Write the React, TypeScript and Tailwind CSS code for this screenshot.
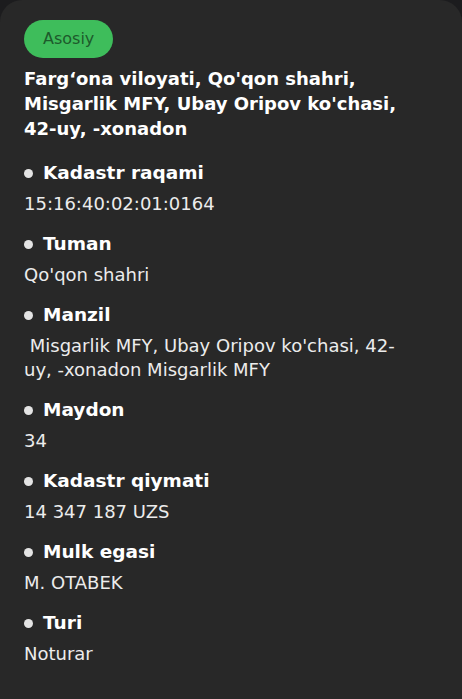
import React from "react";

const font = { fontFamily: '"DejaVu Sans", "Noto Sans", sans-serif' };

const rows: { label: string; value: string }[] = [
  { label: "Kadastr raqami", value: "15:16:40:02:01:0164" },
  { label: "Tuman", value: "Qo'qon shahri" },
  { label: "Manzil", value: "\u00a0Misgarlik MFY, Ubay Oripov ko'chasi, 42-uy, -xonadon Misgarlik MFY" },
  { label: "Maydon", value: "34" },
  { label: "Kadastr qiymati", value: "14 347 187 UZS" },
  { label: "Mulk egasi", value: "M. OTABEK" },
  { label: "Turi", value: "Noturar" },
];

export default function App() {
  return (
    <div className="min-h-screen bg-[#1c1c1e]" style={font}>
      <div className="min-h-[699px] bg-[#282828] rounded-t-[22px] px-6 pt-5 pb-6">
        {/* Badge */}
        <span className="inline-flex items-center h-[38px] px-[19px] rounded-full bg-[#3ebd5b] text-[#1d5a2b] text-[16px]">
          Asosiy
        </span>

        {/* Address title */}
        <h1 className="mt-2 text-[18px] leading-[25px] font-semibold text-white pr-4">
          Farg‘ona viloyati, Qo'qon shahri, Misgarlik MFY, Ubay Oripov ko'chasi, 42-uy, -xonadon
        </h1>

        <div className="mt-5 flex flex-col gap-4">
          {rows.map((r) => (
            <div key={r.label}>
              <div className="flex items-center gap-[10px] h-6">
                <span className="w-[9px] h-[9px] rounded-full bg-[#e4e4e4] shrink-0" />
                <span className="text-[18.5px] font-bold text-white leading-6">{r.label}</span>
              </div>
              <p className="mt-[7px] pr-[30px] text-[18px] leading-6 text-[#ececec] font-normal">{r.value}</p>
            </div>
          ))}
        </div>
      </div>
    </div>
  );
}
